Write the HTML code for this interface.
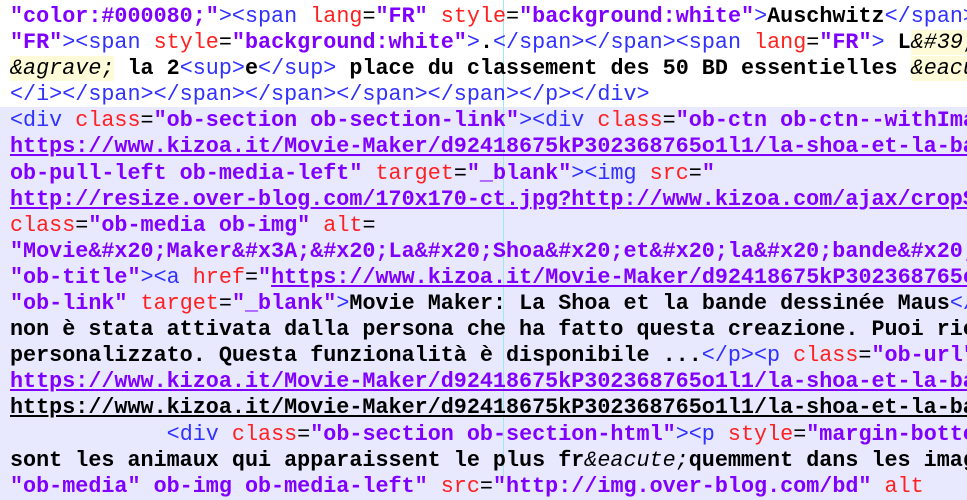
<!DOCTYPE html>
<html><head><meta charset="utf-8"><style>
html,body{margin:0;padding:0;}
body{width:967px;height:477px;overflow:hidden;position:relative;background:#e8e8ff;
font-family:"Liberation Mono","Courier New",monospace;font-size:21.75px;}
.top{position:absolute;left:0;top:0;width:967px;height:107px;background:#fff;}
.guide{position:absolute;left:503px;top:0;width:1px;height:477px;background:#9ee8f0;}
.code{position:absolute;left:10px;top:4px;white-space:pre;line-height:26.1px;}
.t{color:#3030ff}
.a{color:#ff2020}
.s{color:#8000ff;font-weight:bold}
.b{color:#000;font-weight:bold}
.e{font-style:italic;color:#000;background:#fdfbd8}
.i{font-style:italic;color:#000}
.u{text-decoration:underline}
.o{color:#000}
</style></head><body>
<div class="top"></div>
<div class="guide"></div>
<div class="code"><span class="s">"color:#000080;"</span><span class="t">&gt;&lt;span </span><span class="a">lang</span><span class="o">=</span><span class="s">"FR"</span> <span class="a">style</span><span class="o">=</span><span class="s">"background:white"</span><span class="t">&gt;</span><span class="b">Auschwitz</span><span class="t">&lt;/span&gt;</span>
<span class="s">"FR"</span><span class="t">&gt;&lt;span </span><span class="a">style</span><span class="o">=</span><span class="s">"background:white"</span><span class="t">&gt;</span><span class="b">.</span><span class="t">&lt;/span&gt;&lt;/span&gt;&lt;span </span><span class="a">lang</span><span class="o">=</span><span class="s">"FR"</span><span class="t">&gt;</span> <span class="b">L</span><span class="e">&amp;#39;</span>
<span class="e">&amp;agrave;</span><span class="b"> la 2</span><span class="t">&lt;sup&gt;</span><span class="b">e</span><span class="t">&lt;/sup&gt;</span><span class="b"> place du classement des 50 BD essentielles </span><span class="e">&amp;eacu</span>
<span class="t">&lt;/i&gt;&lt;/span&gt;&lt;/span&gt;&lt;/span&gt;&lt;/span&gt;&lt;/span&gt;&lt;/p&gt;&lt;/div&gt;</span>
<span class="t">&lt;div </span><span class="a">class</span><span class="o">=</span><span class="s">"ob-section ob-section-link"</span><span class="t">&gt;&lt;div </span><span class="a">class</span><span class="o">=</span><span class="s">"ob-ctn ob-ctn--withIma</span>
<span class="s u">https://www.kizoa.it/Movie-Maker/d92418675kP302368765o1l1/la-shoa-et-la-ba</span>
<span class="s">ob-pull-left ob-media-left"</span> <span class="a">target</span><span class="o">=</span><span class="s">"_blank"</span><span class="t">&gt;&lt;img </span><span class="a">src</span><span class="o">=</span><span class="s">"</span>
<span class="s u">http://resize.over-blog.com/170x170-ct.jpg?http://www.kizoa.com/ajax/cropS</span>
<span class="a">class</span><span class="o">=</span><span class="s">"ob-media ob-img"</span> <span class="a">alt</span><span class="o">=</span>
<span class="s">"Movie&amp;#x20;Maker&amp;#x3A;&amp;#x20;La&amp;#x20;Shoa&amp;#x20;et&amp;#x20;la&amp;#x20;bande&amp;#x20;</span>
<span class="s">"ob-title"</span><span class="t">&gt;&lt;a </span><span class="a">href</span><span class="o">=</span><span class="s">"<span class="u">https://www.kizoa.it/Movie-Maker/d92418675kP302368765c</span></span>
<span class="s">"ob-link"</span> <span class="a">target</span><span class="o">=</span><span class="s">"_blank"</span><span class="t">&gt;</span><span class="b">Movie Maker: La Shoa et la bande dessinée Maus</span><span class="t">&lt;/</span>
<span class="b">non è stata attivata dalla persona che ha fatto questa creazione. Puoi ric</span>
<span class="b">personalizzato. Questa funzionalità è disponibile ...</span><span class="t">&lt;/p&gt;&lt;p </span><span class="a">class</span><span class="o">=</span><span class="s">"ob-url"</span>
<span class="s u">https://www.kizoa.it/Movie-Maker/d92418675kP302368765o1l1/la-shoa-et-la-ba</span>
<span class="b u">https://www.kizoa.it/Movie-Maker/d92418675kP302368765o1l1/la-shoa-et-la-ba</span>
            <span class="t">&lt;div </span><span class="a">class</span><span class="o">=</span><span class="s">"ob-section ob-section-html"</span><span class="t">&gt;&lt;p </span><span class="a">style</span><span class="o">=</span><span class="s">"margin-botto</span>
<span class="b">sont les animaux qui apparaissent le plus fr</span><span class="i">&amp;eacute;</span><span class="b">quemment dans les imag</span>
<span class="s">"ob-media" ob-img ob-media-left"</span> <span class="a">src</span><span class="o">=</span><span class="s">"http://img.over-blog.com/bd"</span> <span class="a">alt</span></div>
</body></html>
